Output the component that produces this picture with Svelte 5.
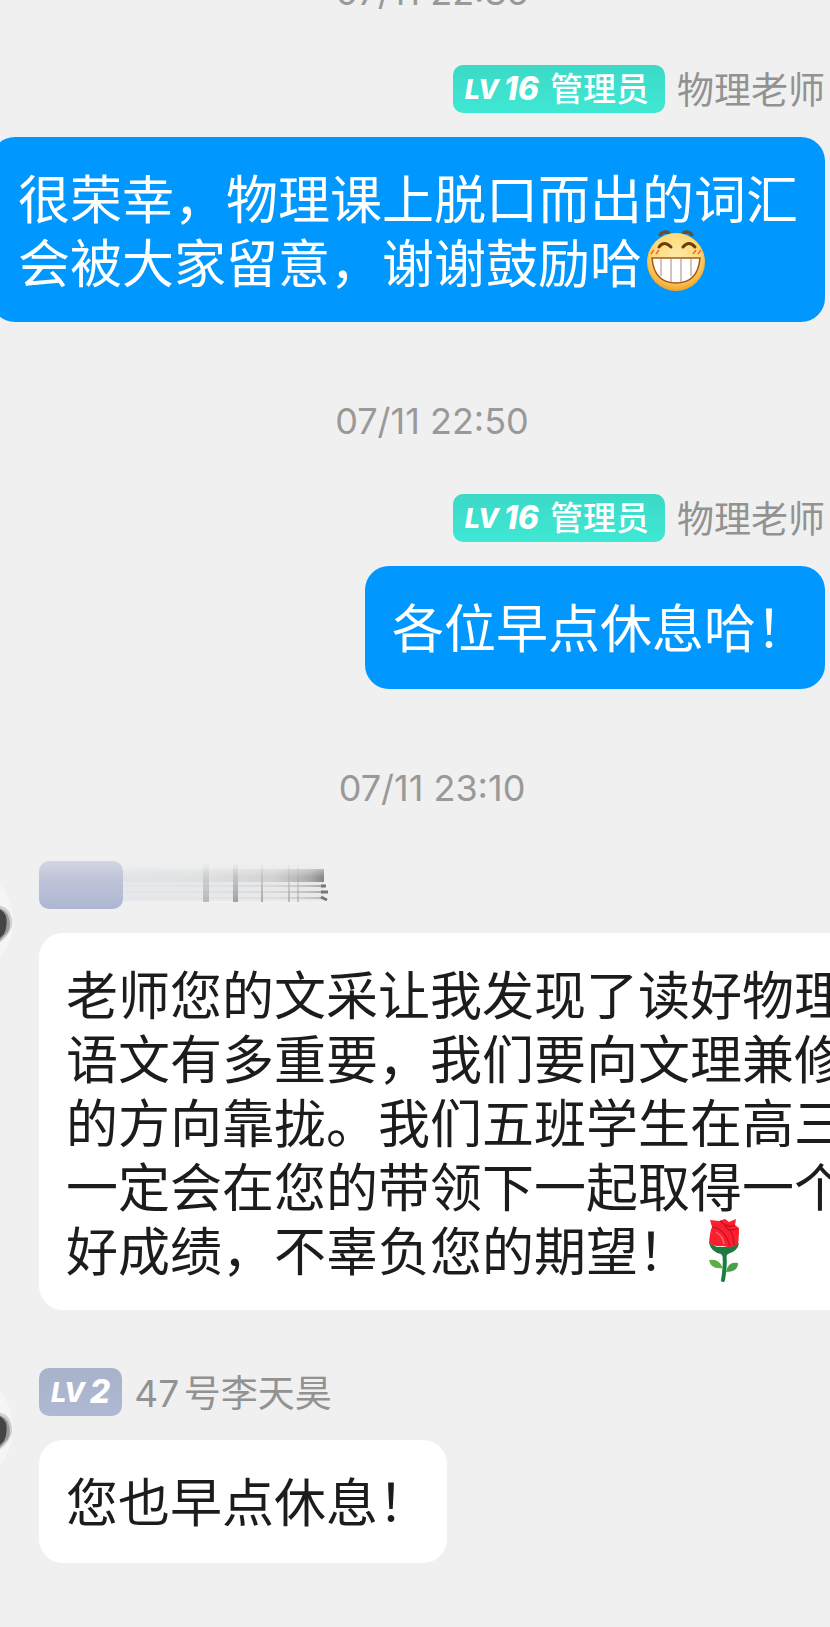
<script lang="ts">
  type Message = {
    time?: string;
    mine: boolean;
    level: string;
    role?: string;
    name: string;
    masked?: boolean;
    text: string;
    sticker?: 'grin' | 'rose';
  };

  const messages: Message[] = [
    {
      time: '07/11 22:35',
      mine: true,
      level: '16',
      role: '管理员',
      name: '物理老师',
      text: '很荣幸，物理课上脱口而出的词汇\n会被大家留意，谢谢鼓励哈',
      sticker: 'grin'
    },
    {
      time: '07/11 22:50',
      mine: true,
      level: '16',
      role: '管理员',
      name: '物理老师',
      text: '各位早点休息哈！'
    },
    {
      time: '07/11 23:10',
      mine: false,
      level: '',
      name: '',
      masked: true,
      text: '老师您的文采让我发现了读好物理\n语文有多重要，我们要向文理兼修\n的方向靠拢。我们五班学生在高三\n一定会在您的带领下一起取得一个\n好成绩，不辜负您的期望！',
      sticker: 'rose'
    },
    {
      mine: false,
      level: '2',
      name: '47号李天昊',
      text: '您也早点休息！'
    }
  ];
</script>

<main class="chat" lang="zh-CN">
  {#each messages as msg}
    {#if msg.time}
      <time class="time">{msg.time}</time>
    {/if}
    <article class="message" class:mine={msg.mine}>
      {#if !msg.mine}
        <svg class="avatar" viewBox="0 0 120 120" aria-hidden="true">
          <circle cx="60" cy="60" r="59" fill="#f5f5f5" />
          <path d="M96 44 Q108 43 114 49 Q119 56 118 65 Q116 72 110 78 L100 86 H90 V46Z" fill="#d0d0d0" />
          <path d="M96 46 Q110 46 114 54 Q118 63 114 71 L104 82 L92 88 V46Z" fill="#9a9a9a" />
          <path d="M96 46 Q108 46 112 55 Q114 65 110 73 L100 83 H90 V46Z" fill="#444" />
        </svg>
      {/if}
      <div class="body">
        <header class="sender">
          {#if msg.masked}
            <span class="badge blank"></span>
            <svg class="smear" viewBox="0 0 206 48" aria-hidden="true">
              <defs>
                <linearGradient id="fade">
                  <stop offset="0" stop-color="#dfe2e6" stop-opacity=".7" />
                  <stop offset=".4" stop-color="#dcdddf" stop-opacity=".7" />
                  <stop offset=".75" stop-color="#ccc" stop-opacity=".8" />
                  <stop offset=".93" stop-color="#aaa" />
                  <stop offset="1" stop-color="#858585" />
                </linearGradient>
                <linearGradient id="haze">
                  <stop offset="0" stop-color="#dfe2e6" />
                  <stop offset="1" stop-color="#e4e4e4" />
                </linearGradient>
                <linearGradient id="soft" x2="0" y2="1">
                  <stop offset="0" stop-color="#f0f0f0" />
                  <stop offset="1" stop-color="#f0f0f0" stop-opacity="0" />
                </linearGradient>
                <linearGradient id="bar" x2="0" y2="1">
                  <stop offset="0" stop-color="#aaa" stop-opacity="0" />
                  <stop offset=".4" stop-color="#aaa" stop-opacity=".6" />
                  <stop offset="1" stop-color="#999" />
                </linearGradient>
              </defs>
              <rect y="2" width="201" height="38" fill="url(#haze)" opacity=".6" />
              <rect y="8" width="201" height="13" fill="url(#fade)" />
              <rect y="24" width="202" height="2" fill="url(#fade)" opacity=".7" />
              <rect y="30" width="203" height="2" fill="url(#fade)" opacity=".7" />
              <rect y="36" width="200" height="2" fill="url(#fade)" opacity=".5" />
              <rect width="206" height="16" fill="url(#soft)" />
              <rect x="80" y="2" width="6" height="39" fill="url(#bar)" opacity=".6" />
              <rect x="110" y="2" width="5" height="39" fill="url(#bar)" opacity=".9" />
              <rect x="138" y="2" width="2" height="39" fill="url(#bar)" opacity=".8" />
              <rect x="165" y="2" width="2" height="39" fill="url(#bar)" opacity=".6" />
              <rect x="174" y="2" width="2" height="39" fill="url(#bar)" opacity=".5" />
              <path d="M198 25h5M198 31h7M198 36l6 3" stroke="#777" stroke-width="3" fill="none" />
            </svg>
          {:else}
            <span class="badge" class:admin={msg.role}>
              <span class="lv">LV</span>
              <span class="level">{msg.level}</span>
              {#if msg.role}<span class="role">{msg.role}</span>{/if}
            </span>
            <span class="name">{msg.name}</span>
          {/if}
        </header>
        <p class="bubble" class:trim={msg.text.endsWith('！') && !msg.sticker}>{msg.text}{#if msg.sticker === 'grin'}<svg class="sticker" viewBox="2 2 64 64" role="img" aria-label="呲牙">
              <defs>
                <radialGradient id="face" cx=".5" cy=".4" r=".6">
                  <stop offset="0" stop-color="#ffe9a8" />
                  <stop offset=".65" stop-color="#fedb78" />
                  <stop offset="1" stop-color="#f2a222" />
                </radialGradient>
              </defs>
              <path d="M18 7q4-5 9-2M41 5q5-3 9 2" fill="none" stroke="#6b4f2c" stroke-width="3" stroke-linecap="round" />
              <circle cx="34" cy="34" r="29" fill="url(#face)" />
              <path d="M17 19q5-7 12 0M41 19q6-7 12 0" fill="none" stroke="#6b3d0c" stroke-width="3" stroke-linecap="round" />
              <path d="M9 26l3-4M14 26l3-4M51 26l3-4M56 26l3-4" stroke="#ee6848" stroke-width="1.5" />
              <path d="M10 30H58Q56 55 34 55T10 30Z" fill="#fff" stroke="#a8591c" stroke-width="1.6" />
              <path d="M19 31v17M29 31v23M39 31v23M49 31v17" stroke="#b99a8c" stroke-width="1.2" />
            </svg>{:else if msg.sticker === 'rose'}<svg class="sticker" viewBox="0 0 64 64" role="img" aria-label="玫瑰">
              <path d="M32 32Q34 45 31 62" fill="none" stroke="#16803f" stroke-width="4" stroke-linecap="round" />
              <path d="M31 50Q27 40 17 42Q19 52 31 50Z" fill="#5cae4b" />
              <path d="M34 54Q36 43 46 45Q46 54 34 54Z" fill="#4aa048" />
              <path d="M17 25Q19 34 29 36L32 40L36 36Q46 33 47 25L38 29H25Z" fill="#1d7a43" />
              <path d="M18 2L27 3L33 1L37 4L44 1L43 7L47 10Q47 20 46 26Q40 31 31 28Q22 29 17 25Q18 13 20 9Z" fill="#fb2030" />
              <path d="M20 9Q32 10 38 28M28 3Q37 11 43 7M38 12Q42 18 42 27M46 11L37 12L33 8" fill="none" stroke="#c50f24" stroke-width="1.2" />
              <path d="M24 14Q31 18 32 26" fill="none" stroke="#ff6a70" stroke-width="1.4" />
            </svg>{/if}</p>
      </div>
    </article>
  {/each}
</main>

<style>
  :global(body) {
    background: #f0f0f0;
  }

  .chat {
    display: flex;
    flex-direction: column;
    padding: 0 5px 64px 39px;
    overflow: hidden;
    color: #1c1c1c;
    font-family: Inter, 'Noto Sans CJK SC', sans-serif;
  }

  .time {
    align-self: center;
    margin: 78px 0 52px;
    color: #999;
    font-size: 36px;
    line-height: 42px;
  }

  /* the list is scrolled so the oldest timestamp is half out of view */
  .time:first-child {
    margin-top: -29px;
  }

  .message {
    display: flex;
    gap: 25px;
    margin-left: -145px;
  }

  .message.mine {
    justify-content: flex-end;
    margin-left: 0;
  }

  .message + .message {
    margin-top: 58px;
  }

  .avatar {
    flex: none;
    width: 120px;
    height: 120px;
  }

  .body {
    display: flex;
    flex: none;
    flex-direction: column;
    align-items: flex-start;
    gap: 24px;
  }

  .mine .body {
    align-items: flex-end;
  }

  .sender {
    display: flex;
    align-items: center;
    gap: 12px;
    height: 48px;
  }

  .badge {
    display: flex;
    align-items: center;
    box-sizing: border-box;
    height: 48px;
    padding: 0 12px;
    border-radius: 10px;
    background: linear-gradient(#a8b2c9, #b0b9d4);
    color: #fff;
  }

  .badge.admin {
    padding-right: 16px;
    background: linear-gradient(#3cd9c7, #3fe8d4);
  }

  .badge.blank {
    width: 84px;
    background: linear-gradient(#d2d5e2, #bfc3d8 40%, #acb6d2);
  }

  .smear {
    width: 206px;
    height: 48px;
    margin-left: -12px;
  }

  .lv,
  .level {
    font-style: italic;
    font-weight: 800;
    line-height: 32px;
  }

  .lv {
    padding-top: 2px;
    font-size: 27px;
  }

  .level {
    margin-left: 5px;
    font-size: 32px;
  }

  .role {
    margin-left: 11px;
    font-size: 33px;
    font-weight: 500;
    line-height: 40px;
  }

  .name {
    padding-top: 4px;
    color: #929292;
    font-size: 37px;
    line-height: 44px;
    text-autospace: normal;
  }

  .bubble {
    box-sizing: border-box;
    width: max-content;
    min-height: 123px;
    margin: 0;
    padding: 32px 27px 25px;
    border-radius: 24px;
    background: #fff;
    font-size: 52px;
    line-height: 64px;
    white-space: pre-line;
  }

  .mine .bubble {
    background: #0097ff;
    color: #fff;
  }

  /* a closing full-width mark carries its own blank space on the right */
  .bubble.trim {
    padding-right: 17px;
  }

  .sticker {
    width: 64px;
    height: 64px;
    margin: -8px 2px;
    vertical-align: -3px;
  }
</style>
